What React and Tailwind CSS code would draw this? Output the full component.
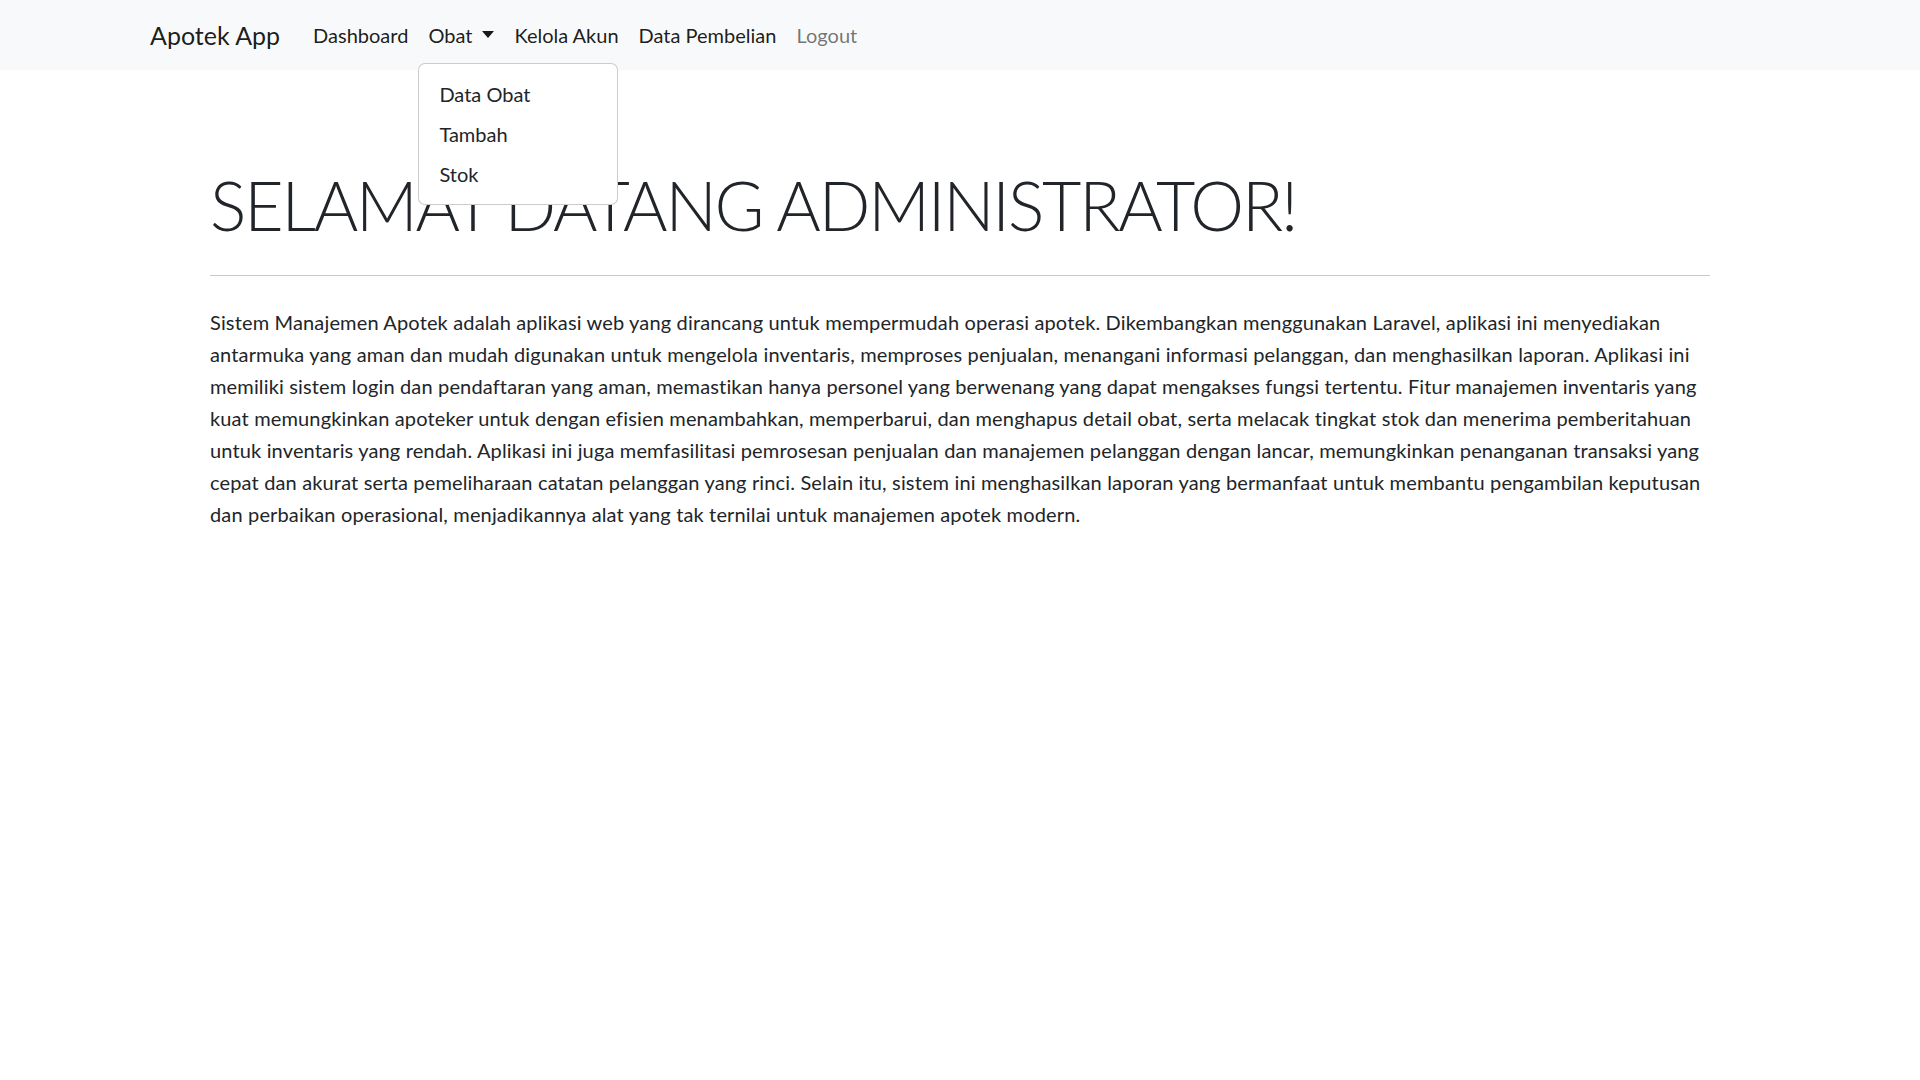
import { useState } from "react";

const links = ["Dashboard", "Obat", "Kelola Akun", "Data Pembelian", "Logout"];

const deskripsi =
  "Sistem Manajemen Apotek adalah aplikasi web yang dirancang untuk mempermudah operasi apotek. Dikembangkan menggunakan Laravel, aplikasi ini menyediakan antarmuka yang aman dan mudah digunakan untuk mengelola inventaris, memproses penjualan, menangani informasi pelanggan, dan menghasilkan laporan. Aplikasi ini memiliki sistem login dan pendaftaran yang aman, memastikan hanya personel yang berwenang yang dapat mengakses fungsi tertentu. Fitur manajemen inventaris yang kuat memungkinkan apoteker untuk dengan efisien menambahkan, memperbarui, dan menghapus detail obat, serta melacak tingkat stok dan menerima pemberitahuan untuk inventaris yang rendah. Aplikasi ini juga memfasilitasi pemrosesan penjualan dan manajemen pelanggan dengan lancar, memungkinkan penanganan transaksi yang cepat dan akurat serta pemeliharaan catatan pelanggan yang rinci. Selain itu, sistem ini menghasilkan laporan yang bermanfaat untuk membantu pengambilan keputusan dan perbaikan operasional, menjadikannya alat yang tak ternilai untuk manajemen apotek modern.";

function Navbar() {
  const [open, setOpen] = useState(true);

  return (
    <nav className="h-[70px] bg-[#f8f9fa] flex items-center pl-[150px]">
      <a href="#" className="text-[25px] leading-[30px] text-black/90 mr-[23px]">
        Apotek App
      </a>
      <ul className="flex items-center">
        {links.map((l) => (
          <li key={l} className="relative">
            <a
              href="#"
              onClick={(e) => {
                e.preventDefault();
                if (l === "Obat") setOpen(!open);
              }}
              className={
                "block px-[10px] py-[10px] text-[20px] leading-[30px] " +
                (l === "Logout" ? "text-black/55" : "text-black/90")
              }
            >
              {l}
              {l === "Obat" && (
                <span className="inline-block ml-[10px] align-[5px] border-t-[7px] border-x-[6.5px] border-x-transparent border-t-black/90" />
              )}
            </a>
            {l === "Obat" && open && (
              <div className="absolute left-0 top-[53px] w-[200px] py-[10px] bg-white border border-black/20 rounded-[7px] z-10">
                {["Data Obat", "Tambah", "Stok"].map((d) => (
                  <a key={d} href="#" className="block px-[20px] py-[5px] text-[20px] leading-[30px] text-[#212529]">
                    {d}
                  </a>
                ))}
              </div>
            )}
          </li>
        ))}
      </ul>
    </nav>
  );
}

export default function App() {
  return (
    <div className="min-h-screen bg-white text-[#212529]" style={{ fontFamily: "Lato, 'Open Sans', sans-serif" }}>
      <Navbar />
      <main className="w-[1500px] mx-auto pt-[93px]">
        <h1 className="text-[68px] leading-[84px] font-light tracking-[-2.2px] mb-[10px]">SELAMAT DATANG ADMINISTRATOR!</h1>
        <hr className="mt-[28px] mb-[20px] border-t border-[#c8c8c8]" />
        <p className="text-[20px] leading-[32px] tracking-[0.15px] pt-[10px]">{deskripsi}</p>
      </main>
    </div>
  );
}
